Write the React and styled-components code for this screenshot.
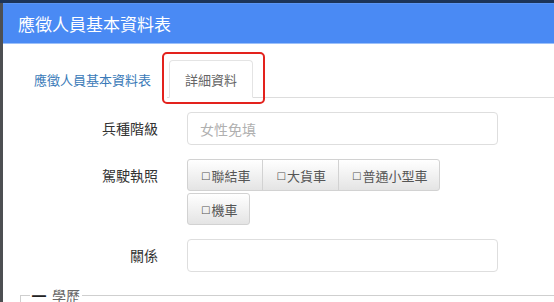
import React from "react";
import styled, { createGlobalStyle } from "styled-components";

const GlobalStyle = createGlobalStyle`
    html, body {
        margin: 0;
        padding: 0;
        width: 554px;
        height: 302px;
        overflow: hidden;
    }
    body {
        font-family: "Noto Sans CJK TC", "Noto Sans", sans-serif;
        background: #ffffff;
    }
`;

const licenses = [["聯結車", "大貨車", "普通小型車"], ["機車"]];

const App = () => {
    return (
        <Backdrop>
            <GlobalStyle />
            <Modal>
                <Header>
                    <Title>應徵人員基本資料表</Title>
                </Header>
                <Body>
                    <Tabs>
                        <Tab>應徵人員基本資料表</Tab>
                        <Tab active>
                            詳細資料
                            <Highlight />
                        </Tab>
                    </Tabs>

                    <FormRow>
                        <Label>兵種階級</Label>
                        <Input placeholder="女性免填" />
                    </FormRow>

                    <FormRow>
                        <Label>駕駛執照</Label>
                        <ButtonStack>
                            {licenses.map((group, i) => (
                                <ButtonGroup key={i}>
                                    {group.map(name => (
                                        <OptionButton key={name}>
                                            <Box>□</Box>
                                            {name}
                                        </OptionButton>
                                    ))}
                                </ButtonGroup>
                            ))}
                        </ButtonStack>
                    </FormRow>

                    <FormRow>
                        <Label>關係</Label>
                        <Input />
                    </FormRow>

                    <Fieldset>
                        <Legend>
                            <Dash>━</Dash>學歷
                        </Legend>
                    </Fieldset>
                </Body>
            </Modal>
        </Backdrop>
    );
};

const Backdrop = styled.div`
    height: 302px;
    padding: 3px 0 0 3px;
    box-sizing: border-box;
    background: linear-gradient(#1c3459 0 3px, #4d4f52 3px);
    overflow: hidden;
`;

const Modal = styled.div`
    width: 600px;
    height: 320px;
    background: #ffffff;
`;

const Header = styled.div`
    height: 41px;
    display: flex;
    align-items: center;
    padding-left: 15px;
    background: #4a8af4;
    border-top: 1px solid #5a95f3;
    border-bottom: 1px solid #9cc0f9;
    box-sizing: border-box;
`;

const Title = styled.h4`
    margin: 0;
    font-size: 17px;
    font-weight: normal;
    color: #ffffff;
    line-height: 1;
    margin-top: -1px;
`;

const Body = styled.div`
    padding: 15px 0 0 15px;
`;

const Tabs = styled.div`
    display: flex;
    align-items: flex-end;
    border-bottom: 1px solid #dddddd;
    height: 38px;
`;

const Tab = styled.div`
    position: relative;
    height: 38px;
    box-sizing: border-box;
    display: flex;
    align-items: center;
    padding: 0 15px;
    margin-right: 2px;
    margin-bottom: -1px;
    font-size: 13px;
    color: ${p => (p.active ? "#666666" : "#3a7ab8")};
    background: #ffffff;
    border: 1px solid ${p => (p.active ? "#e4e4e4" : "transparent")};
    border-bottom-color: ${p => (p.active ? "#ffffff" : "transparent")};
    border-radius: 4px 4px 0 0;
`;

const Highlight = styled.span`
    position: absolute;
    top: -9px;
    left: -8px;
    right: -13px;
    bottom: -7px;
    border: 2px solid #e3221d;
    border-radius: 5px;
    pointer-events: none;
`;

const FormRow = styled.div`
    display: flex;
    align-items: flex-start;
    margin-top: 14px;
`;

const Label = styled.div`
    width: 155px;
    padding-right: 15px;
    box-sizing: border-box;
    text-align: right;
    font-size: 14px;
    color: #333333;
    line-height: 32px;
`;

const Input = styled.input`
    margin-left: 14px;
    width: 311px;
    height: 33px;
    box-sizing: border-box;
    padding: 0 12px;
    font-family: inherit;
    font-size: 14px;
    color: #555555;
    border: 1px solid #dedede;
    border-radius: 4px;
    outline: none;
    &::placeholder {
        color: #b0b0b0;
    }
`;

const ButtonStack = styled.div`
    margin-left: 14px;
    display: flex;
    flex-direction: column;
    gap: 2px;
`;

const ButtonGroup = styled.div`
    display: flex;
`;

const OptionButton = styled.div`
    height: 32px;
    box-sizing: border-box;
    padding: 0 12px 0 13px;
    display: flex;
    align-items: center;
    font-size: 13px;
    color: #555555;
    background: linear-gradient(#ffffff, #e4e4e4);
    border: 1px solid #d2d2d2;
    margin-left: -1px;
    &:first-child {
        margin-left: 0;
        border-radius: 3px 0 0 3px;
    }
    &:last-child {
        border-radius: 0 3px 3px 0;
    }
    &:only-child {
        border-radius: 3px;
    }
`;

const Box = styled.span`
    font-family: "DejaVu Sans", sans-serif;
    font-size: 10px;
    margin-right: 1px;
`;

const Fieldset = styled.div`
    margin-top: 23px;
    margin-left: 2px;
    height: 40px;
    border-top: 1px solid #cfcfcf;
    border-left: 1px solid #cfcfcf;
    position: relative;
`;

const Legend = styled.div`
    position: absolute;
    top: -10px;
    left: 9px;
    padding: 0 2px;
    background: #ffffff;
    font-size: 14px;
    color: #666666;
    line-height: 18px;
`;

const Dash = styled.span`
    font-weight: bold;
    color: #222222;
    margin-right: 6px;
`;

export default App;
